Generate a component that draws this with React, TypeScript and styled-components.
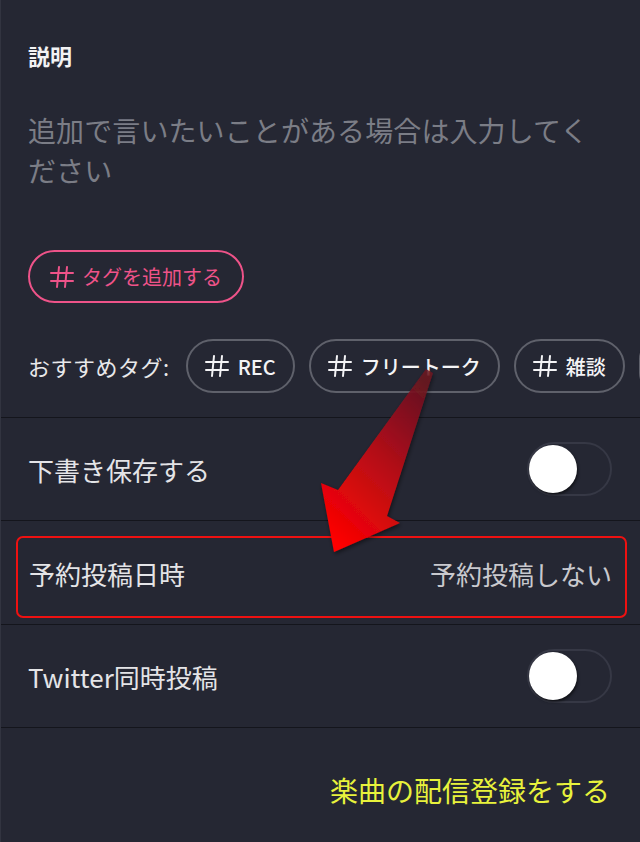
import React from "react";
import styled, { createGlobalStyle } from "styled-components";

const GlobalStyle = createGlobalStyle`
  html, body {
    margin: 0;
    padding: 0;
    background: #252733;
  }
  body {
    font-family: "Noto Sans CJK JP", "Noto Sans", sans-serif;
  }
`;

const Page = styled.div`
  position: relative;
  width: 640px;
  min-height: 842px;
  box-sizing: border-box;
  background: #252733;
  border-left: 1px solid #44465170;
  overflow: hidden;
`;

const Section = styled.div`
  padding: 40px 28px 24px 27px;
  display: flex;
  flex-direction: column;
  align-items: flex-start;
`;

const Label = styled.div`
  font-size: 22px;
  line-height: 30px;
  font-weight: 700;
  color: #f2f2f4;
`;

const Placeholder = styled.div`
  margin-top: 40px;
  font-size: 28px;
  line-height: 40px;
  color: #7b7d86;
  width: 100%;
  letter-spacing: 0.1px;
`;

const Chip = styled.div<{ $accent?: boolean }>`
  display: inline-flex;
  align-items: center;
  gap: ${(p) => (p.$accent ? "8px" : "9px")};
  height: ${(p) => (p.$accent ? "53px" : "54px")};
  min-width: 40px;
  box-sizing: border-box;
  padding: 0 ${(p) => (p.$accent ? "20px" : "17px")};
  border-radius: 27px;
  border: 2px solid ${(p) => (p.$accent ? "#ee5389" : "#5f616b")};
  color: ${(p) => (p.$accent ? "#ee5389" : "#f4f4f6")};
  font-size: 20px;
  font-weight: ${(p) => (p.$accent ? 400 : 500)};
  white-space: nowrap;
  flex-shrink: 0;
`;

const AddChip = styled(Chip)`
  margin-top: 60px;
`;

const TagRow = styled.div`
  margin-top: 36px;
  display: flex;
  align-items: center;
  gap: 14px;
  width: calc(100% + 28px);
  overflow: hidden;
`;

const TagLabel = styled.span`
  font-size: 22px;
  letter-spacing: 0.5px;
  color: #e8e8ea;
  white-space: nowrap;
  margin-right: 2px;
`;

const SettingRow = styled.div`
  height: 103px;
  box-sizing: border-box;
  border-top: 1px solid #14151c;
  display: flex;
  align-items: center;
  justify-content: space-between;
  padding: 0 28px 0 27px;
`;

const HighlightRow = styled.div`
  height: 104px;
  box-sizing: border-box;
  border-top: 1px solid #14151c;
  padding: 15px 13px 6px 15px;
  display: flex;
`;

const HighlightBox = styled.div`
  flex: 1;
  border: 2px solid #ee1111;
  border-radius: 7px;
  display: flex;
  align-items: center;
  justify-content: space-between;
  padding: 0 13px 7px 11px;
`;

const RowLabel = styled.span`
  font-size: 26px;
  color: #e4e4e7;
  white-space: nowrap;
`;

const RowValue = styled.span`
  font-size: 26px;
  color: #c9c9ce;
  white-space: nowrap;
`;

const Toggle = styled.div`
  width: 85px;
  height: 54px;
  box-sizing: border-box;
  border-radius: 27px;
  border: 2px solid #363845;
  display: flex;
  align-items: center;
`;

const Knob = styled.div`
  width: 48px;
  height: 48px;
  border-radius: 50%;
  background: #ffffff;
  box-shadow: 1px 2px 3px rgba(0, 0, 0, 0.55);
`;

const Footer = styled.div`
  border-top: 1px solid #14151c;
  display: flex;
  justify-content: flex-end;
  padding: 42px 30px 40px;
`;

const Link = styled.span`
  font-size: 28px;
  line-height: 40px;
  color: #e8f23c;
`;

const ArrowLayer = styled.svg`
  position: absolute;
  left: 0;
  top: 0;
  pointer-events: none;
`;

const HashIcon = ({ color }: { color: string }) => (
  <svg width="24" height="22" viewBox="0 0 24 22" fill="none" stroke={color} strokeWidth="2" strokeLinecap="round">
    <line x1="9" y1="1" x2="7" y2="21" />
    <line x1="17" y1="1" x2="15" y2="21" />
    <line x1="1" y1="7" x2="23" y2="7" />
    <line x1="1" y1="15" x2="23" y2="15" />
  </svg>
);

const tags = ["REC", "フリートーク", "雑談"];

export default function App() {
  return (
    <>
      <GlobalStyle />
      <Page>
        <Section>
          <Label>説明</Label>
          <Placeholder>追加で言いたいことがある場合は入力してください</Placeholder>
          <AddChip $accent>
            <HashIcon color="#ee5389" />
            タグを追加する
          </AddChip>
          <TagRow>
            <TagLabel>おすすめタグ:</TagLabel>
            {tags.map((t) => (
              <Chip key={t}>
                <HashIcon color="#f4f4f6" />
                {t}
              </Chip>
            ))}
            <Chip aria-hidden />
          </TagRow>
        </Section>
        <SettingRow>
          <RowLabel>下書き保存する</RowLabel>
          <Toggle>
            <Knob />
          </Toggle>
        </SettingRow>
        <HighlightRow>
          <HighlightBox>
            <RowLabel>予約投稿日時</RowLabel>
            <RowValue>予約投稿しない</RowValue>
          </HighlightBox>
        </HighlightRow>
        <SettingRow>
          <RowLabel>Twitter同時投稿</RowLabel>
          <Toggle>
            <Knob />
          </Toggle>
        </SettingRow>
        <Footer>
          <Link>楽曲の配信登録をする</Link>
        </Footer>
        <ArrowLayer width="640" height="842" viewBox="0 0 640 842">
          <defs>
            <linearGradient id="arrowGrad" x1="0.8" y1="0" x2="0.2" y2="1">
              <stop offset="0" stopColor="#6e1421" stopOpacity="0.85" />
              <stop offset="0.45" stopColor="#b01018" />
              <stop offset="1" stopColor="#ff0000" />
            </linearGradient>
            <filter id="arrowShadow" x="-20%" y="-20%" width="140%" height="140%">
              <feDropShadow dx="1" dy="2" stdDeviation="2" floodColor="#000" floodOpacity="0.5" />
            </filter>
          </defs>
          <polygon
            points="425,369 432,373 386,516 399,523 333,552 320,483 337,490"
            fill="url(#arrowGrad)"
            filter="url(#arrowShadow)"
          />
        </ArrowLayer>
      </Page>
    </>
  );
}
